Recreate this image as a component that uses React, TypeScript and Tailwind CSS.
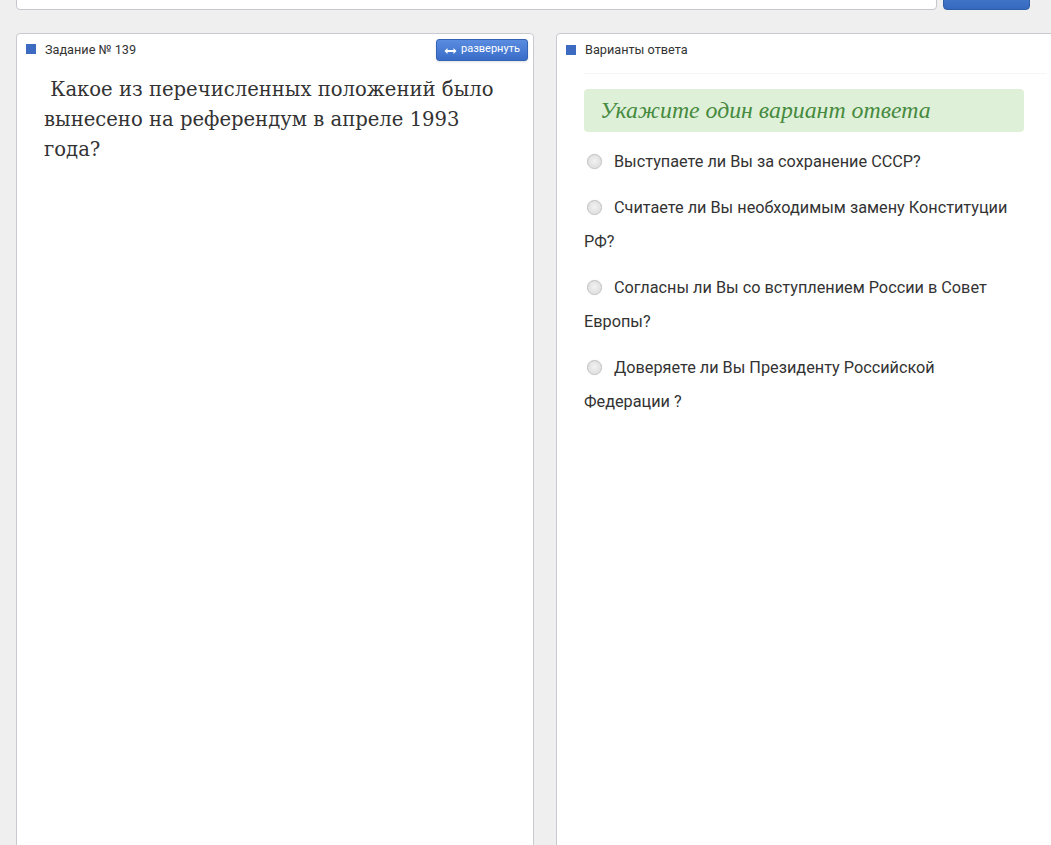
import React from 'react';

const options = [
  'Выступаете ли Вы за сохранение СССР?',
  'Считаете ли Вы необходимым замену Конституции РФ?',
  'Согласны ли Вы со вступлением России в Совет Европы?',
  'Доверяете ли Вы Президенту Российской Федерации ?',
];

const Radio: React.FC = () => (
  <span className="inline-block align-middle w-[15px] h-[15px] rounded-full border border-[#c0c0c0] bg-[radial-gradient(circle_at_50%_45%,#f2f2f2_0%,#e2e2e2_60%,#f4f4f4_100%)] shadow-[0_0_1px_#ddd] mr-[12px] ml-[3px] -mt-[3px]" />
);

const App: React.FC = () => {
  return (
    <div className="w-[1051px] h-[845px] overflow-hidden bg-[#efefef] font-['Roboto',sans-serif] text-[#333]">
      {/* top search row, mostly scrolled out of view */}
      <div className="flex items-end gap-[6px] pl-[16px] -mt-[24px] h-[34px]">
        <div className="w-[921px] h-[34px] bg-white border border-[#c6c6cc] rounded-[4px]" />
        <button className="w-[87px] h-[34px] rounded-[4px] bg-gradient-to-b from-[#5b8fd9] to-[#3569c0] border border-[#2f5ea8]" />
      </div>

      <div className="flex gap-[22px] pl-[16px] mt-[23px]">
        {/* left panel */}
        <div className="w-[518px] h-[830px] shrink-0 bg-white border border-[#c9c9d1] rounded-t-[4px]">
          <div className="flex items-center justify-between h-[30px] pl-[9px] pr-[5px] pt-[1px]">
            <div className="flex items-center gap-[9px]">
              <span className="w-[10px] h-[10px] bg-[#3d6bc2]" />
              <span className="text-[12.7px]">Задание № 139</span>
            </div>
            <button className="flex items-center gap-[4px] h-[22px] w-[92px] justify-center rounded-[3px] bg-gradient-to-b from-[#5a8de0] to-[#3a6cc8] border border-[#3463b5] text-white text-[11px] shadow-sm">
              <svg width="13" height="8" viewBox="0 0 13 8" className="mt-[2px]">
                <path d="M0.5 4 L3.5 1 L3.5 3 L9.5 3 L9.5 1 L12.5 4 L9.5 7 L9.5 5 L3.5 5 L3.5 7 Z" fill="white" />
              </svg>
              развернуть
            </button>
          </div>
          <div className="pl-[27px] pr-[20px] pt-[11px] font-['DejaVu_Serif',serif] text-[19.6px] leading-[30px] text-[#333]">
            &nbsp;Какое из перечисленных положений было вынесено на референдум в апреле 1993 года?
          </div>
        </div>

        {/* right panel */}
        <div className="w-[518px] h-[830px] shrink-0 bg-white border border-[#c9c9d1] rounded-t-[4px]">
          <div className="flex items-center gap-[9px] h-[30px] pl-[9px] pt-[1px]">
            <span className="w-[10px] h-[10px] bg-[#3d6bc2]" />
            <span className="text-[12.7px]">Варианты ответа</span>
          </div>
          <div className="mx-[27px] mt-[9px] border-t border-[#f5f5f5]" />
          <div className="pl-[27px] pt-[15px] w-[467px]">
            <div className="h-[43px] flex items-center pl-[16px] bg-[#dff0d8] rounded-[4px] font-['Liberation_Serif',serif] italic text-[23.8px] text-[#468a3f]">
              Укажите один вариант ответа
            </div>
            <div className="mt-[13px] text-[16.25px] leading-[34px] text-[#333]">
              {options.map((o) => (
                <div key={o} className="mb-[12px]">
                  <Radio />
                  {o}
                </div>
              ))}
            </div>
          </div>
        </div>
      </div>
    </div>
  );
};

export default App;
